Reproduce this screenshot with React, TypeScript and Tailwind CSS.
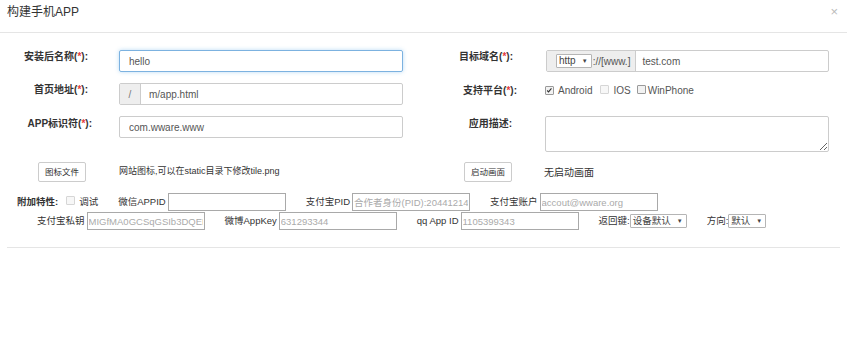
import React from 'react';

const Req = () => (
  <>
    (<span className="text-[#e4393c]">*</span>)
  </>
);

function Label({ text, req, w = 'w-[88px]' }: { text: string; req?: boolean; w?: string }) {
  return (
    <div className={`${w} shrink-0 text-right font-bold leading-[14px] text-[#333]`}>
      {text}
      {req && <Req />}:
    </div>
  );
}

function Box({ checked, light }: { checked?: boolean; light?: boolean }) {
  return (
    <span
      className={`relative inline-block h-[9px] w-[9px] shrink-0 rounded-[1px] border ${
        light ? 'border-[#d6d6d6] bg-[#f7f7f7]' : 'border-[#9a9a9a] bg-[#f2f2f2]'
      }`}
    >
      {checked && (
        <svg viewBox="0 0 9 9" className="absolute left-0 top-0 h-[7px] w-[7px]">
          <path d="M1.5 4.5 L3.3 6.3 L7 1.8" fill="none" stroke="#333" strokeWidth="1.4" />
        </svg>
      )}
    </span>
  );
}

function Select({ text }: { text: string }) {
  return (
    <span className="inline-flex h-[14px] items-center rounded-[1px] border border-[#b5b5b5] bg-white pl-[2px] pr-[3px] leading-none text-[#444]">
      {text}
      <span className="ml-[6px] text-[6px] text-[#444]">▼</span>
    </span>
  );
}

function Field({ label, value, first }: { label: string; value: string; first?: boolean }) {
  return (
    <div className={`flex items-center ${first ? '' : 'ml-[20px]'}`}>
      <span className="text-[#333]">{label}</span>
      <input
        readOnly
        placeholder={value}
        className="ml-[2px] h-[18px] w-[118px] border border-[#a9a9a9] bg-white px-[1px] text-[9.5px] text-[#333] outline-none placeholder:text-[#aaa]"
      />
    </div>
  );
}

export default function App() {
  return (
    <div className="h-[350px] w-[847px] bg-white font-['Liberation_Sans','Noto_Sans_CJK_SC',sans-serif] text-[10px]">
      {/* 标题 */}
      <div className="flex h-[33px] items-start justify-between border-b border-[#e5e5e5] pl-[7px] pr-[9px] pt-[5px]">
        <span className="text-[12px] leading-[14px] text-[#333]">构建手机APP</span>
        <span className="text-[13px] leading-[14px] text-[#bbb]">×</span>
      </div>

      <div className="pt-[17px]">
        {/* 第一行 */}
        <div className="flex">
          <div className="flex w-[423px]">
            <Label text="安装后名称" req />
            <input
              readOnly
              value="hello"
              className="ml-[31px] h-[22px] w-[284px] rounded-[2px] border border-[#7cb2e0] px-[9px] text-[10px] text-[#555] shadow-[0_0_4px_rgba(102,175,233,0.45)] outline-none"
            />
          </div>
          <div className="flex">
            <Label text="目标域名" req w="w-[90px]" />
            <div className="ml-[33px] flex h-[22px] w-[283px] overflow-hidden rounded-[2px] border border-[#ccc]">
              <div className="flex items-center border-r border-[#ccc] bg-[#eee] pl-[9px] pr-[5px] text-[#555]">
                <Select text="http" />
                <span className="ml-[1px]">://[www.]</span>
              </div>
              <div className="flex items-center pl-[6px] text-[#555]">test.com</div>
            </div>
          </div>
        </div>

        {/* 第二行 */}
        <div className="mt-[11px] flex">
          <div className="flex w-[423px]">
            <Label text="首页地址" req />
            <div className="ml-[31px] flex h-[22px] w-[284px] overflow-hidden rounded-[2px] border border-[#ccc]">
              <div className="flex w-[21px] items-center justify-center border-r border-[#ccc] bg-[#eee] text-[#777]">/</div>
              <div className="flex items-center pl-[8px] text-[#555]">m/app.html</div>
            </div>
          </div>
          <div className="flex">
            <div className="pt-[1px]">
              <Label text="支持平台" req w="w-[94px]" />
            </div>
            <div className="ml-[28px] flex h-[14px] items-center pt-[1px] text-[#555]">
              <Box checked />
              <span className="ml-[4px]">Android</span>
              <span className="ml-[8px]">
                <Box light />
              </span>
              <span className="ml-[4px]">IOS</span>
              <span className="ml-[6px]">
                <Box />
              </span>
              <span className="ml-[2px]">WinPhone</span>
            </div>
          </div>
        </div>

        {/* 第三行 */}
        <div className="mt-[11px] flex">
          <div className="flex w-[423px] pt-[1px]">
            <Label text="APP标识符" req w="w-[92px]" />
            <input
              readOnly
              value="com.wware.www"
              className="-mt-[1px] ml-[27px] h-[22px] w-[284px] rounded-[2px] border border-[#ccc] px-[9px] text-[10px] text-[#555] outline-none"
            />
          </div>
          <div className="flex pt-[1px]">
            <Label text="应用描述" w="w-[89px]" />
            <textarea
              readOnly
              className="-mt-[1px] ml-[33px] h-[36px] w-[284px] rounded-[2px] border border-[#ccc] outline-none"
            />
          </div>
        </div>

        {/* 第四行 */}
        <div className="mt-[10px] flex items-center">
          <div className="flex w-[423px] items-center pl-[38px]">
            <button className="h-[20px] w-[48px] rounded-[2px] border border-[#ccc] bg-white text-[8.5px] text-[#333]">
              图标文件
            </button>
            <span className="ml-[33px] text-[9px] text-[#333]">网站图标,可以在static目录下修改tile.png</span>
          </div>
          <div className="flex items-center pl-[41px]">
            <button className="h-[20px] w-[48px] rounded-[2px] border border-[#ccc] bg-white text-[8.5px] text-[#333]">
              启动画面
            </button>
            <span className="ml-[32px] text-[#333]">无启动画面</span>
          </div>
        </div>

        {/* 附加特性 */}
        <div className="mt-[11px] flex h-[18px] items-center pl-[17px] text-[9.5px]">
          <span className="font-bold text-[#333]">附加特性:</span>
          <span className="ml-[8px]">
            <Box light />
          </span>
          <span className="ml-[4px] text-[#333]">调试</span>
          <Field label="微信APPID" value="" />
          <Field label="支付宝PID" value="合作者身份(PID):20441214" />
          <Field label="支付宝账户" value="accout@wware.org" />
        </div>

        <div className="mt-[1px] flex h-[18px] items-center pl-[37px] text-[9.5px]">
          <Field label="支付宝私钥" value="MIGfMA0GCSqGSIb3DQEBAQUAA4GNADCBiQKBgQ" first />
          <Field label="微博AppKey" value="631293344" />
          <Field label="qq App ID" value="1105399343" />
          <div className="ml-[20px] flex items-center">
            <span className="text-[#333]">返回键:</span>
            <Select text="设备默认" />
          </div>
          <div className="ml-[20px] flex items-center">
            <span className="text-[#333]">方向:</span>
            <Select text="默认" />
          </div>
        </div>

        <div className="mx-[7px] mt-[17px] border-t border-[#e5e5e5]" />
      </div>
    </div>
  );
}
